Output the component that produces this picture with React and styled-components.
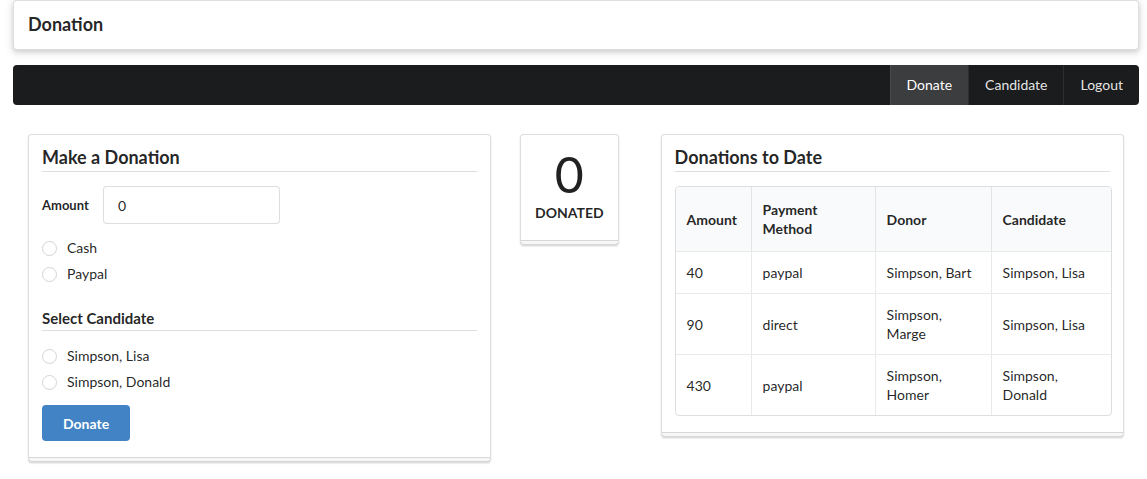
import React from "react";
import styled, { createGlobalStyle } from "styled-components";

const GlobalStyle = createGlobalStyle`
  * { box-sizing: border-box; }
  body {
    margin: 0;
    background: #fff;
    font-family: Lato, "Helvetica Neue", Arial, sans-serif;
    font-size: 14px;
    line-height: 1.4285em;
    color: rgba(0, 0, 0, 0.87);
  }
`;

const candidates = ["Simpson, Lisa", "Simpson, Donald"];
const donations = [
  { amount: 40, method: "paypal", donor: "Simpson, Bart", candidate: "Simpson, Lisa" },
  { amount: 90, method: "direct", donor: "Simpson, Marge", candidate: "Simpson, Lisa" },
  { amount: 430, method: "paypal", donor: "Simpson, Homer", candidate: "Simpson, Donald" },
];

export default function App() {
  return (
    <Page>
      <GlobalStyle />
      <TitleBar>
        <PageTitle>Donation</PageTitle>
      </TitleBar>
      <NavMenu>
        <NavItem $active>Donate</NavItem>
        <NavItem>Candidate</NavItem>
        <NavItem>Logout</NavItem>
      </NavMenu>
      <Columns>
        <Card $width="463px">
          <CardHeader>Make a Donation</CardHeader>
          <AmountField>
            <FieldLabel>Amount</FieldLabel>
            <AmountInput defaultValue="0" />
          </AmountField>
          <RadioGroup $top="15px">
            <RadioRow>
              <RadioDot />
              Cash
            </RadioRow>
            <RadioRow>
              <RadioDot />
              Paypal
            </RadioRow>
          </RadioGroup>
          <SubHeader>Select Candidate</SubHeader>
          <RadioGroup $top="16px">
            {candidates.map((c) => (
              <RadioRow key={c}>
                <RadioDot />
                {c}
              </RadioRow>
            ))}
          </RadioGroup>
          <BlueButton>Donate</BlueButton>
        </Card>

        <StatCard>
          <StatValue>0</StatValue>
          <StatLabel>Donated</StatLabel>
        </StatCard>

        <Card $width="463px">
          <CardHeader>Donations to Date</CardHeader>
          <Table>
            <colgroup>
              <col style={{ width: 75 }} />
              <col style={{ width: 124 }} />
              <col style={{ width: 116 }} />
              <col style={{ width: 120 }} />
            </colgroup>
            <thead>
              <tr>
                <Th>Amount</Th>
                <Th>Payment Method</Th>
                <Th>Donor</Th>
                <Th>Candidate</Th>
              </tr>
            </thead>
            <tbody>
              {donations.map((d, i) => (
                <tr key={i}>
                  <Td>{d.amount}</Td>
                  <Td>{d.method}</Td>
                  <Td>{d.donor}</Td>
                  <Td>{d.candidate}</Td>
                </tr>
              ))}
            </tbody>
          </Table>
        </Card>
      </Columns>
    </Page>
  );
}

const Page = styled.div`
  padding: 0 8px 20px 13px;
`;

const TitleBar = styled.div`
  background: #fff;
  border: 1px solid rgba(34, 36, 38, 0.15);
  border-radius: 4px;
  box-shadow: 0 2px 4px 0 rgba(34, 36, 38, 0.12), 0 2px 10px 0 rgba(34, 36, 38, 0.15);
  padding: 12px 14px 14px;
`;

const PageTitle = styled.h3`
  margin: 0;
  font-size: 18px;
  line-height: 22px;
  font-weight: 700;
`;

const NavMenu = styled.nav`
  margin-top: 15px;
  height: 40px;
  background: #1b1c1d;
  border-radius: 4px;
  display: flex;
  justify-content: flex-end;
  overflow: hidden;
`;

const NavItem = styled.a`
  display: flex;
  align-items: center;
  padding: 0 16px;
  color: ${(p) => (p.$active ? "#fff" : "rgba(255,255,255,0.9)")};
  background: ${(p) => (p.$active ? "rgba(255,255,255,0.15)" : "transparent")};
  border-left: 1px solid rgba(255, 255, 255, 0.08);
  cursor: pointer;
`;

const Columns = styled.div`
  margin-top: 29px;
  padding-left: 15px;
  display: flex;
  align-items: flex-start;
  gap: 29px;
  & > :last-child {
    margin-left: 13px;
  }
`;

const Segment = styled.div`
  position: relative;
  background: #fff;
  border: 1px solid rgba(34, 36, 38, 0.15);
  border-radius: 4px;
  box-shadow: 0 1px 2px 0 rgba(34, 36, 38, 0.15);
  padding: 11px 13px 20px;
  &::after {
    content: "";
    position: absolute;
    left: 0;
    bottom: -3px;
    width: 100%;
    height: 6px;
    border-top: 1px solid rgba(34, 36, 38, 0.15);
    background: rgba(0, 0, 0, 0.03);
  }
`;

const Card = styled(Segment)`
  width: ${(p) => p.$width};
`;

const CardHeader = styled.h3`
  margin: 0;
  font-size: 18px;
  line-height: 22px;
  font-weight: 700;
  padding-bottom: 3px;
  border-bottom: 1px solid rgba(34, 36, 38, 0.15);
`;

const SubHeader = styled.h4`
  margin: 25px 0 0;
  font-size: 15px;
  line-height: 20px;
  font-weight: 700;
  padding-bottom: 2px;
  border-bottom: 1px solid rgba(34, 36, 38, 0.15);
`;

const AmountField = styled.div`
  margin-top: 14px;
  display: flex;
  align-items: center;
  gap: 14px;
`;

const FieldLabel = styled.label`
  font-size: 13px;
  font-weight: 700;
  width: 47px;
`;

const AmountInput = styled.input`
  width: 177px;
  height: 38px;
  padding: 0 14px;
  font-family: inherit;
  font-size: 14px;
  color: rgba(0, 0, 0, 0.87);
  border: 1px solid rgba(34, 36, 38, 0.15);
  border-radius: 4px;
  outline: none;
`;

const RadioGroup = styled.div`
  margin-top: ${(p) => p.$top};
  display: flex;
  flex-direction: column;
  gap: 8px;
`;

const RadioRow = styled.label`
  display: flex;
  align-items: center;
  height: 18px;
  line-height: 18px;
`;

const RadioDot = styled.span`
  width: 15px;
  height: 15px;
  margin-right: 10px;
  border: 1px solid #d4d4d5;
  border-radius: 50%;
  background: #fff;
`;

const BlueButton = styled.button`
  margin-top: 14px;
  display: block;
  height: 36px;
  padding: 0 21px;
  font-family: inherit;
  font-size: 14px;
  font-weight: 700;
  color: #fff;
  background: #4183c4;
  border: none;
  border-radius: 4px;
  cursor: pointer;
`;

const StatCard = styled(Segment)`
  padding: 14px 14px 23px;
  text-align: center;
`;

const StatValue = styled.div`
  font-size: 50px;
  line-height: 1;
  font-weight: 400;
`;

const StatLabel = styled.div`
  margin-top: 6px;
  font-size: 14px;
  line-height: 16px;
  font-weight: 700;
  text-transform: uppercase;
`;

const Table = styled.table`
  margin-top: 14px;
  width: 100%;
  table-layout: fixed;
  border-collapse: separate;
  border-spacing: 0;
  border: 1px solid rgba(34, 36, 38, 0.15);
  border-radius: 4px;
  overflow: hidden;
`;

const Th = styled.th`
  text-align: left;
  font-weight: 700;
  background: #f9fafb;
  padding: 13px 11px;
  line-height: 19px;
  & + & {
    border-left: 1px solid rgba(34, 36, 38, 0.1);
  }
`;

const Td = styled.td`
  padding: 11px 11px;
  line-height: 19px;
  border-top: 1px solid rgba(34, 36, 38, 0.1);
  & + & {
    border-left: 1px solid rgba(34, 36, 38, 0.1);
  }
`;
